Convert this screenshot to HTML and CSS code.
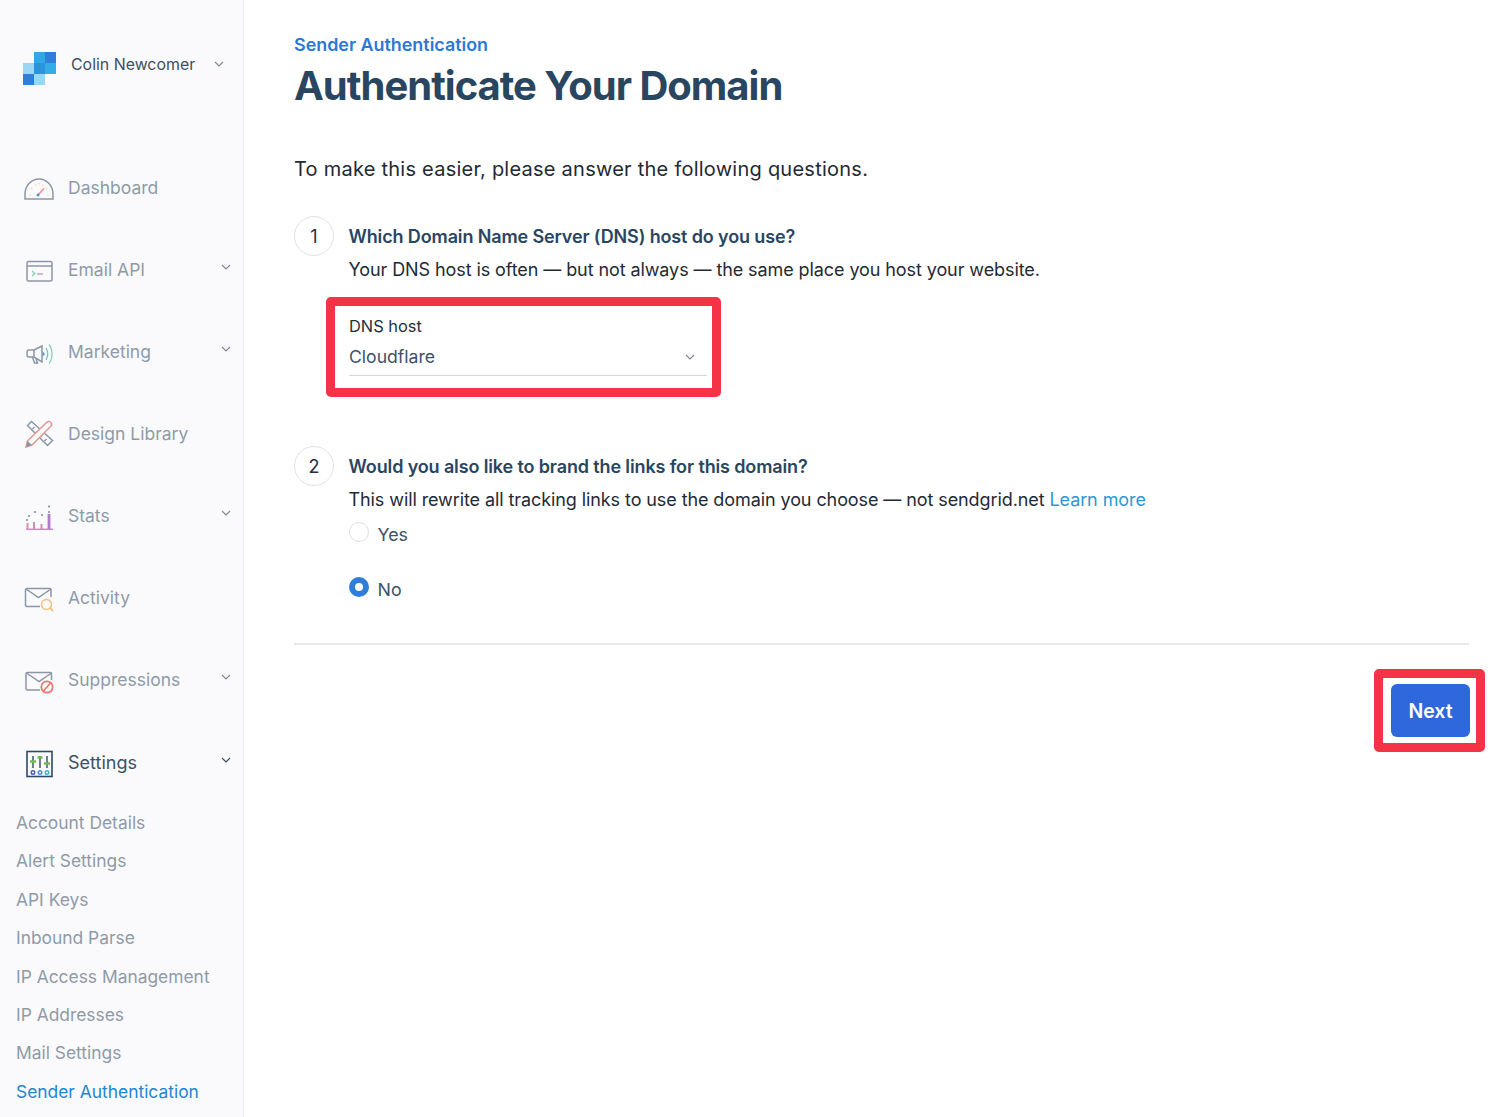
FILE: index.html
```html
<!DOCTYPE html>
<html lang="en">
<head>
<meta charset="utf-8">
<title>Authenticate Your Domain</title>
<link rel="stylesheet" href="styles.css">
</head>
<body>
<div class="app">
  <aside class="sidebar">
    <div class="brand">
      <svg class="logo" width="33" height="33" viewBox="0 0 33 33">
        <rect x="11" y="0" width="11" height="11" fill="#30a8e4"/>
        <rect x="22" y="0" width="11" height="11" fill="#2f7edb"/>
        <rect x="0" y="11" width="11" height="11" fill="#99d8f2"/>
        <rect x="11" y="11" width="11" height="11" fill="#2b92dd"/>
        <rect x="22" y="11" width="11" height="11" fill="#34ade7"/>
        <rect x="0" y="22" width="11" height="11" fill="#2f7edb"/>
        <rect x="11" y="22" width="11" height="11" fill="#99d8f2"/>
      </svg>
      <span class="brand-name">Colin Newcomer</span>
      <svg class="chev brand-chev" width="10" height="6" viewBox="0 0 10 6"><path d="M1 1l4 4 4-4"/></svg>
    </div>
    <nav class="nav">
      <a class="nav-item">
        <svg class="nav-icon" width="30" height="28" viewBox="0 0 30 28" fill="none">
          <path d="M1 25v-5C1 12 7 5 15 5s14 7 14 15v5z" stroke="#8c97a6" stroke-width="1.500"/>
          <path d="M5 21h2M7 14l1.300 1.300M11.500 10.500l.6 1.500M15 9v1.500M19 10.500l-.6 1.500M23 14l-1.300 1.300M25 21h-2" stroke="#f0d9a0" stroke-width="1.200"/>
          <path d="M14.500 20.500l5.500-6" stroke="#ef8d7e" stroke-width="1.500"/>
          <circle cx="14" cy="21" r="1.500" fill="#5d8fc4"/>
        </svg>
        <span>Dashboard</span>
      </a>
      <a class="nav-item">
        <svg class="nav-icon" width="30" height="28" viewBox="0 0 30 28" fill="none">
          <rect x="3" y="5.500" width="25" height="19.500" rx="1.500" stroke="#8c97a6" stroke-width="1.500"/>
          <path d="M3 10h25" stroke="#8c97a6" stroke-width="1.500"/>
          <path d="M8 15l3 2.500-3 2.500" stroke="#7fd6b4" stroke-width="1.300"/>
          <path d="M13 18h6" stroke="#9aa5b3" stroke-width="1.300"/>
        </svg>
        <span>Email API</span>
        <svg class="chev" width="10" height="6" viewBox="0 0 10 6"><path d="M1 1l4 4 4-4"/></svg>
      </a>
      <a class="nav-item">
        <svg class="nav-icon" width="30" height="28" viewBox="0 0 30 28" fill="none">
          <path d="M10 12l8-4v16l-8-5H5a2 2 0 0 1-2-2v-3a2 2 0 0 1 2-2z" stroke="#8c97a6" stroke-width="1.500"/>
          <path d="M10 12v7M8.500 19l2 6h3l-1.500-4.500" stroke="#8c97a6" stroke-width="1.500"/>
          <path d="M18.500 13l2.500 3-2.500 3z" fill="#5d9bd6"/>
          <path d="M22 10c2 3.500 2 8.500 0 12" stroke="#7bb9e0" stroke-width="1.300"/>
          <path d="M25 6.500c4 5 4 14 0 19" stroke="#7fd6b4" stroke-width="1.300"/>
        </svg>
        <span>Marketing</span>
        <svg class="chev" width="10" height="6" viewBox="0 0 10 6"><path d="M1 1l4 4 4-4"/></svg>
      </a>
      <a class="nav-item">
        <svg class="nav-icon" width="30" height="28" viewBox="0 0 30 28" fill="none">
          <g transform="translate(.5 0)">
            <path d="M6 1.500l-4 4 20 20 5-5zM7 9l2-2M11 13l2-2M15 17l2-2M19 21l2-2" stroke="#8c97a6" stroke-width="1.500" transform="translate(1 0)"/>
            <path d="M1.500 27l1.500-6L22 2.500a2.500 2.500 0 0 1 4.500 3.500L7.500 25z" fill="#fafafd" stroke="#e59a90" stroke-width="1.500"/>
            <path d="M1.500 27l1.500-6 4.500 4z" fill="#8c97a6"/>
          </g>
        </svg>
        <span>Design Library</span>
      </a>
      <a class="nav-item">
        <svg class="nav-icon" width="30" height="28" viewBox="0 0 30 28" fill="none">
          <path d="M2 27.300h27" stroke="#c58bd0" stroke-width="1.500"/>
          <path d="M3.500 27v-6" stroke="#e08fa8" stroke-width="2"/>
          <path d="M10 27v-7M17.500 27v-5" stroke="#d38ab8" stroke-width="2"/>
          <path d="M25 27V12" stroke="#b07cc8" stroke-width="2.800"/>
          <g fill="#7c8998">
            <circle cx="5" cy="14" r="1"/><circle cx="11" cy="10" r="1"/><circle cx="18" cy="13" r="1"/>
            <circle cx="25" cy="4.500" r="1"/><circle cx="25" cy="10" r="1"/><circle cx="3" cy="18" r="1"/>
          </g>
        </svg>
        <span>Stats</span>
        <svg class="chev" width="10" height="6" viewBox="0 0 10 6"><path d="M1 1l4 4 4-4"/></svg>
      </a>
      <a class="nav-item">
        <svg class="nav-icon" width="30" height="28" viewBox="0 0 30 28" fill="none">
          <path d="M16 22.500H3A1.500 1.500 0 0 1 1.500 21V6A1.500 1.500 0 0 1 3 4.500h22.500A1.500 1.500 0 0 1 27 6v7" stroke="#8c97a6" stroke-width="1.500"/>
          <path d="M2 5l12.500 8.500L27 5" stroke="#8c97a6" stroke-width="1.500"/>
          <circle cx="22.500" cy="20.500" r="5" stroke="#f1c27d" stroke-width="1.600"/>
          <path d="M26 24l3 3" stroke="#f1c27d" stroke-width="1.800"/>
        </svg>
        <span>Activity</span>
      </a>
      <a class="nav-item">
        <svg class="nav-icon" width="30" height="28" viewBox="0 0 30 28" fill="none">
          <path d="M16 24H3.500A1.500 1.500 0 0 1 2 22.500V8A1.500 1.500 0 0 1 3.500 6.500h22A1.500 1.500 0 0 1 27.500 8v6" stroke="#8c97a6" stroke-width="1.500"/>
          <path d="M2.500 7l12.500 8.500L27.500 7" stroke="#8c97a6" stroke-width="1.500"/>
          <circle cx="23" cy="21" r="5.700" fill="#fafafd" stroke="#e8776c" stroke-width="1.700"/>
          <path d="M19.500 25l7-8" stroke="#e8776c" stroke-width="1.700"/>
        </svg>
        <span>Suppressions</span>
        <svg class="chev" width="10" height="6" viewBox="0 0 10 6"><path d="M1 1l4 4 4-4"/></svg>
      </a>
      <a class="nav-item is-open">
        <svg class="nav-icon" width="30" height="28" viewBox="0 0 30 28" fill="none">
          <rect x="3" y="3.500" width="25" height="25" stroke="#2f4a63" stroke-width="1.600"/>
          <path d="M9 8v12M16 8v12M23 8v12" stroke="#2f4a63" stroke-width="1.400"/>
          <path d="M6 13.500h6M13.500 9.500h5M20 15.500h6" stroke="#6cc04a" stroke-width="2.400"/>
          <circle cx="9" cy="24.500" r="1.800" stroke="#4a58b5" stroke-width="1.400"/>
          <circle cx="16" cy="24.500" r="1.800" stroke="#3f8fdc" stroke-width="1.400"/>
          <circle cx="23" cy="24.500" r="1.800" stroke="#35b5c9" stroke-width="1.400"/>
        </svg>
        <span>Settings</span>
        <svg class="chev" width="10" height="6" viewBox="0 0 10 6"><path d="M1 1l4 4 4-4"/></svg>
      </a>
    </nav>
    <ul class="subnav">
      <li>Account Details</li>
      <li>Alert Settings</li>
      <li>API Keys</li>
      <li>Inbound Parse</li>
      <li>IP Access Management</li>
      <li>IP Addresses</li>
      <li>Mail Settings</li>
      <li class="is-current">Sender Authentication</li>
    </ul>
  </aside>

  <main class="main">
    <div class="eyebrow">Sender Authentication</div>
    <h1 class="title">Authenticate Your Domain</h1>
    <p class="intro">To make this easier, please answer the following questions.</p>

    <section class="step">
      <div class="step-num">1</div>
      <div class="step-body">
        <h2 class="question">Which Domain Name Server (DNS) host do you use?</h2>
        <p class="desc">Your DNS host is often — but not always — the same place you host your website.</p>
        <div class="callout">
          <div class="field-label">DNS host</div>
          <div class="field-select">
            <span>Cloudflare</span>
            <svg class="chev" width="10" height="6" viewBox="0 0 10 6"><path d="M1 1l4 4 4-4"/></svg>
          </div>
        </div>
      </div>
    </section>

    <section class="step step-two">
      <div class="step-num">2</div>
      <div class="step-body">
        <h2 class="question">Would you also like to brand the links for this domain?</h2>
        <p class="desc">This will rewrite all tracking links to use the domain you choose — not sendgrid.net <a class="link">Learn more</a></p>
        <div class="radio"><span class="radio-dot"></span><span>Yes</span></div>
        <div class="radio radio-no"><span class="radio-dot is-on"></span><span>No</span></div>
      </div>
    </section>

    <hr class="rule">

    <div class="actions">
      <div class="next-callout"><button class="next" type="button">Next</button></div>
    </div>
  </main>
</div>
</body>
</html>
```
FILE: styles.css
```css
* { box-sizing: border-box; }
html, body { margin: 0; height: 100%; }
body {
  font-family: Inter, "Liberation Sans", sans-serif;
  background: #fff;
  color: #22303d;
  overflow: hidden;
}
.app { display: flex; height: 1117px; overflow: hidden; }

.sidebar {
  width: 244px;
  flex: none;
  background: #fafafd;
  border-right: 1px solid #eceef3;
}
.brand {
  display: flex;
  align-items: center;
  height: 147px;
  padding: 0 0 19px 23px;
}
.logo { flex: none; margin-top: 9px; }
.brand-name {
  margin-left: 15px;
  font-size: 15.900px;
  color: #3d4f61;
}
.brand-chev { margin-left: 19px; }
.chev { flex: none; fill: none; stroke: #7f8b99; stroke-width: 1.200; }

.nav-item {
  display: flex;
  align-items: center;
  height: 82px;
  padding: 0 12px 0 24px;
  font-size: 17.500px;
  color: #8f9aa8;
}
.nav-item span { margin-bottom: 2px; }
.nav-icon { flex: none; margin-right: 14px; overflow: visible; }
.nav-item .chev { margin-left: auto; margin-bottom: 6px; }
.is-open { color: #3d5166; font-size: 18px; }
.is-open span { margin-bottom: 0; }
.is-open .chev { stroke: #3d5166; margin-bottom: 4px; }

.subnav { list-style: none; margin: 1px 0 0; padding: 0 0 0 16px; }
.subnav li {
  height: 38.400px;
  line-height: 38.400px;
  font-size: 17.400px;
  color: #8f9aa8;
  white-space: nowrap;
}
.subnav .is-current { color: #1f86d0; }

.main { flex: 1; min-width: 0; padding: 33px 31px 0 50px; }
.eyebrow {
  font-size: 17.900px;
  line-height: 24px;
  font-weight: 600;
  color: #2b78d6;
}
.title {
  margin: 0;
  font-size: 40px;
  line-height: 58px;
  font-weight: 700;
  letter-spacing: -1px;
  color: #294661;
}
.intro {
  margin: 40px 0 33px;
  font-size: 20px;
  line-height: 28px;
  letter-spacing: 0.245px;
  color: #1f2a35;
}
.step { display: flex; gap: 14.500px; }
.step-two { margin-top: 49px; }
.step-num {
  flex: none;
  width: 40px;
  height: 40px;
  border: 1.500px solid #e0e2e6;
  border-radius: 50%;
  display: flex;
  align-items: center;
  justify-content: center;
  font-size: 18px;
  color: #22303d;
}
.step-body { flex: 1; padding-top: 4px; }
.question {
  margin: 0;
  font-size: 18px;
  line-height: 33px;
  font-weight: 600;
  letter-spacing: -0.130px;
  color: #294661;
}
.desc {
  margin: 0;
  font-size: 18px;
  line-height: 34px;
  letter-spacing: -0.090px;
  color: #1f2a35;
}
.link { color: #2f97d6; }

.callout {
  width: 395px;
  height: 100px;
  margin: 10px 0 0 -22.500px;
  padding: 9px 5px 0 14px;
  border: 9px solid #f53347;
  border-radius: 5px;
}
.field-label { font-size: 16.400px; line-height: 24px; margin-top: -1px; color: #22303d; }
.field-select {
  display: flex;
  align-items: center;
  justify-content: space-between;
  height: 38px;
  padding: 0 12px 0 0;
  border-bottom: 1px solid #d3d7dc;
  font-size: 17.600px;
  color: #3d5166;
}

.radio {
  display: flex;
  align-items: center;
  gap: 9px;
  height: 34px;
  font-size: 17.800px;
  color: #3d5166;
}
.radio-no { margin-top: 21px; }
.radio-dot {
  width: 20px;
  height: 20px;
  margin-top: -4px;
  border: 1.500px solid #dcdfe4;
  border-radius: 50%;
  background: #fff;
}
.radio-dot.is-on { border: 6px solid #2f7edb; }

.rule { margin: 37px 0 0; border: 0; border-top: 2px solid #e6e8ea; }
.actions { display: flex; justify-content: flex-end; margin: 24px -16px 0 0; }
.next-callout {
  width: 111px;
  height: 83px;
  padding: 6px 0 0 8px;
  border: 9px solid #f53347;
  border-radius: 5px;
}
.next {
  display: block;
  width: 79px;
  height: 53px;
  padding: 0;
  border: 0;
  border-radius: 6px;
  background: #2f67dc;
  color: #fff;
  font: 600 19.500px Inter, "Liberation Sans", sans-serif;
}
```
